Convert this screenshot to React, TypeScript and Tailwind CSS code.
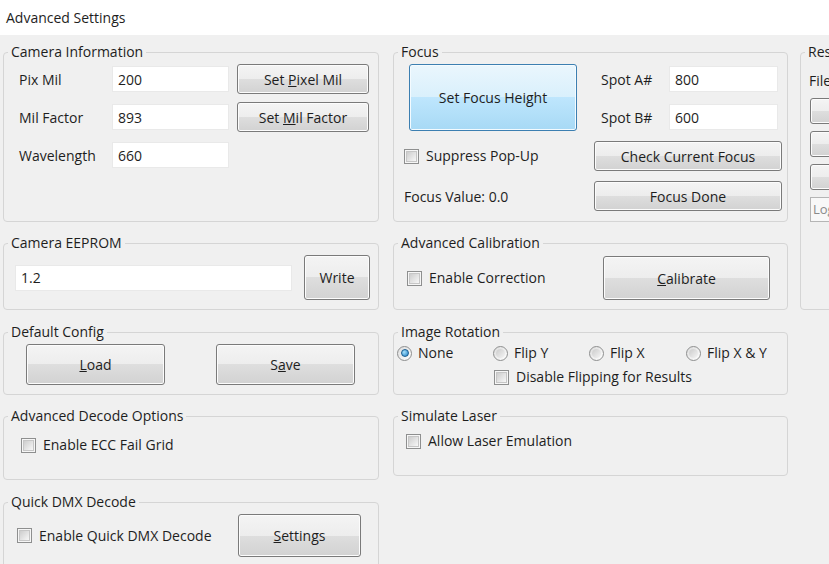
import React from "react";

function Group({ title, className, children }: { title: string; className?: string; children?: React.ReactNode }) {
  return (
    <fieldset className={`min-w-0 rounded-[4px] border border-[#d5d5d5] ${className ?? ""}`}>
      <legend className="ml-[4px] px-[3px] text-[14px] leading-[18px]">{title}</legend>
      {children}
    </fieldset>
  );
}

function Btn({ children, className, blue }: { children?: React.ReactNode; className?: string; blue?: boolean }) {
  const skin = blue
    ? "border-[#3c7fb1] bg-[linear-gradient(to_bottom,#eaf6fd_0%,#d9f0fc_50%,#bee6fd_50%,#a7d9f5_100%)] shadow-[inset_0_0_0_1px_#f4fbff]"
    : "border-[#7a7a7a] bg-[linear-gradient(to_bottom,#f4f4f4_0%,#ededed_50%,#dedede_50%,#d2d2d2_100%)] shadow-[inset_0_0_0_1px_#fcfcfc]";
  return (
    <button
      type="button"
      className={`flex shrink-0 items-center justify-center rounded-[3px] border text-[14px] text-[#1e1e1e] ${skin} ${className ?? ""}`}
    >
      {children}
    </button>
  );
}

function TextBox({ value, className }: { value: string; className?: string }) {
  return (
    <input
      readOnly
      value={value}
      className={`shrink-0 border border-[#e9e9e9] bg-white pl-[5px] text-[14px] text-[#1e1e1e] outline-none ${className ?? ""}`}
    />
  );
}

function Check() {
  return (
    <span className="flex h-[15px] w-[15px] shrink-0 items-center justify-center border border-[#8e8f8f] bg-[#f6f6f6]">
      <span className="h-[11px] w-[11px] border border-[#c6c6c6] bg-[linear-gradient(135deg,#cdcdcd,#f7f7f7)]" />
    </span>
  );
}

function Radio({ on }: { on?: boolean }) {
  return (
    <span className="flex h-[15px] w-[15px] shrink-0 items-center justify-center rounded-full border border-[#8e8f8f] bg-[linear-gradient(135deg,#dcdcdc,#ffffff)]">
      {on ? (
        <span className="h-[8px] w-[8px] rounded-full border border-[#1b5d8f] bg-[radial-gradient(circle_at_35%_35%,#a6e0fb,#1e7fc5)]" />
      ) : (
        <span className="h-[9px] w-[9px] rounded-full bg-[linear-gradient(135deg,#cbcbcb,#f5f5f5)]" />
      )}
    </span>
  );
}

function CheckLabel({ text, className }: { text: string; className?: string }) {
  return (
    <label className={`flex h-[18px] items-center gap-[7px] leading-[18px] ${className ?? ""}`}>
      <Check />
      <span>{text}</span>
    </label>
  );
}

function RadioLabel({ text, on, className }: { text: string; on?: boolean; className?: string }) {
  return (
    <label className={`flex h-[18px] items-center gap-[6px] leading-[18px] ${className ?? ""}`}>
      <Radio on={on} />
      <span>{text}</span>
    </label>
  );
}

function CamRow({ label, value, btn }: { label: string; value: string; btn?: React.ReactNode }) {
  return (
    <div className="flex h-[30px] items-center">
      <span className="w-[93px] shrink-0">{label}</span>
      <TextBox value={value} className="h-[26px] w-[117px]" />
      {btn ? <Btn className="ml-[8px] h-[30px] w-[132px]">{btn}</Btn> : null}
    </div>
  );
}

export default function App() {
  return (
    <div className="h-[564px] w-[829px] overflow-hidden bg-[#f0f0f0] font-['Open_Sans','Noto_Sans',sans-serif] text-[14px] text-[#1e1e1e]">
      <div className="flex h-[35px] items-center bg-white px-[6px]">Advanced Settings</div>
      <div className="flex pl-[3px] pt-[8px]">
        {/* Column 1 */}
        <div className="flex w-[376px] shrink-0 flex-col">
          <Group title="Camera Information" className="h-[179px]">
            <div className="flex flex-col gap-[8px] pl-[15px] pt-[3px]">
              <CamRow label="Pix Mil" value="200" btn={<span>Set <u>P</u>ixel Mil</span>} />
              <CamRow label="Mil Factor" value="893" btn={<span>Set <u>M</u>il Factor</span>} />
              <CamRow label="Wavelength" value="660" />
            </div>
          </Group>
          <Group title="Camera EEPROM" className="mt-[12px] h-[76px]">
            <div className="flex items-center gap-[12px] pl-[11px] pt-[3px]">
              <TextBox value="1.2" className="h-[26px] w-[277px]" />
              <Btn className="h-[45px] w-[66px]">Write</Btn>
            </div>
          </Group>
          <Group title="Default Config" className="mt-[13px] h-[72px]">
            <div className="flex gap-[51px] pl-[22px] pt-[3px]">
              <Btn className="h-[41px] w-[139px]"><span><u>L</u>oad</span></Btn>
              <Btn className="h-[41px] w-[139px]"><span>S<u>a</u>ve</span></Btn>
            </div>
          </Group>
          <Group title="Advanced Decode Options" className="mt-[12px] h-[73px]">
            <div className="pl-[17px] pt-[11px]">
              <CheckLabel text="Enable ECC Fail Grid" />
            </div>
          </Group>
          <Group title="Quick DMX Decode" className="mt-[13px] h-[90px]">
            <div className="flex items-center pl-[13px] pt-[3px]">
              <CheckLabel text="Enable Quick DMX Decode" className="w-[221px] shrink-0" />
              <Btn className="h-[43px] w-[123px]"><span><u>S</u>ettings</span></Btn>
            </div>
          </Group>
        </div>

        {/* Column 2 */}
        <div className="ml-[14px] flex w-[395px] shrink-0 flex-col">
          <Group title="Focus" className="h-[179px]">
            <div className="grid grid-cols-[190px_188px] gap-y-[10px] pl-[10px] pt-[3px]">
              <div className="pl-[5px]">
                <Btn blue className="h-[67px] w-[168px]">Set Focus Height</Btn>
              </div>
              <div className="flex flex-col gap-[12px] pt-[2px]">
                <div className="flex items-center">
                  <span className="w-[75px] shrink-0 pl-[7px]">Spot A#</span>
                  <TextBox value="800" className="h-[26px] w-[109px]" />
                </div>
                <div className="flex items-center">
                  <span className="w-[75px] shrink-0 pl-[7px]">Spot B#</span>
                  <TextBox value="600" className="h-[26px] w-[109px]" />
                </div>
              </div>
              <div className="flex items-center">
                <CheckLabel text="Suppress Pop-Up" />
              </div>
              <Btn className="h-[30px] w-[188px]">Check Current Focus</Btn>
              <div className="flex items-center">
                <span>Focus Value: 0.0</span>
              </div>
              <Btn className="h-[30px] w-[188px]">Focus Done</Btn>
            </div>
          </Group>
          <Group title="Advanced Calibration" className="mt-[12px] h-[76px]">
            <div className="flex items-center pl-[13px] pt-[4px]">
              <CheckLabel text="Enable Correction" className="w-[196px] shrink-0" />
              <Btn className="h-[44px] w-[167px]"><span><u>C</u>alibrate</span></Btn>
            </div>
          </Group>
          <Group title="Image Rotation" className="mt-[13px] h-[72px]">
            <div className="flex flex-col gap-[6px] pl-[3px] pt-[3px]">
              <div className="flex">
                <RadioLabel text="None" on className="w-[96px] shrink-0" />
                <RadioLabel text="Flip Y" className="w-[96px] shrink-0" />
                <RadioLabel text="Flip X" className="w-[97px] shrink-0" />
                <RadioLabel text="Flip X & Y" />
              </div>
              <CheckLabel text="Disable Flipping for Results" className="ml-[97px]" />
            </div>
          </Group>
          <Group title="Simulate Laser" className="mt-[12px] h-[69px]">
            <div className="pl-[12px] pt-[7px]">
              <CheckLabel text="Allow Laser Emulation" />
            </div>
          </Group>
        </div>

        {/* Column 3 (clipped) */}
        <div className="ml-[12px] w-[200px] shrink-0">
          <Group title="Results" className="h-[267px] w-[200px]">
            <div className="flex flex-col pl-[8px] pt-[11px]">
              <span className="leading-[18px]">File Name</span>
              <div className="mt-[8px] flex flex-col gap-[7px] pl-[1px]">
                <Btn className="h-[26px] w-[160px]">Browse</Btn>
                <Btn className="h-[26px] w-[160px]">Open</Btn>
                <Btn className="h-[26px] w-[160px]">Clear</Btn>
                <div className="flex h-[25px] w-[160px] items-center border border-[#b5b5b5] bg-[#f8f8f8] pl-[2px] text-[13px] text-[#8a8a8a]">
                  Log File
                </div>
              </div>
            </div>
          </Group>
        </div>
      </div>
    </div>
  );
}
